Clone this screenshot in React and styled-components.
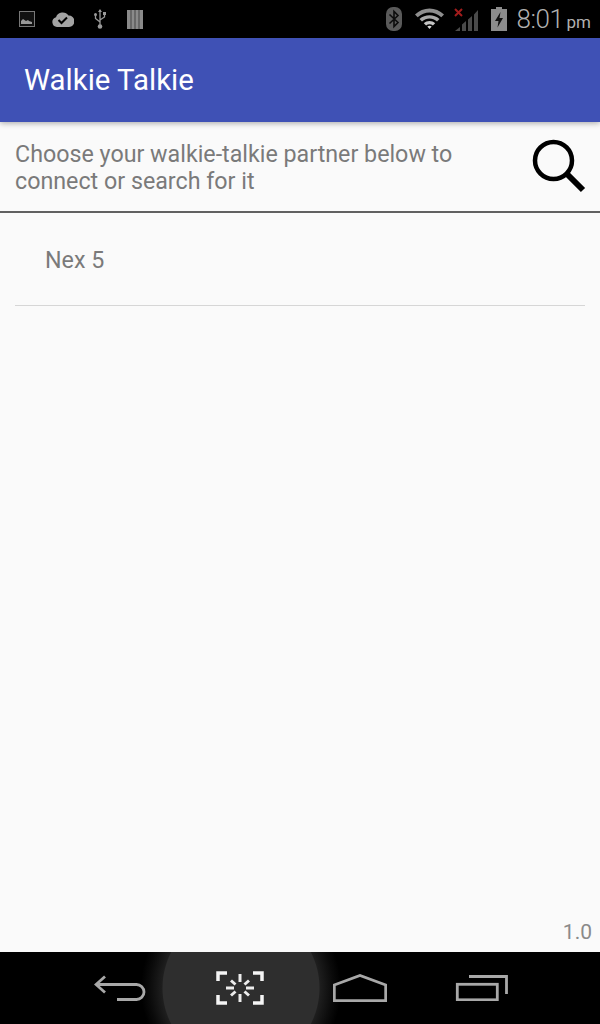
import React from "react";
import styled, { createGlobalStyle } from "styled-components";

const Global = createGlobalStyle`
  html, body { margin: 0; padding: 0; background: #fafafa; }
  * { box-sizing: border-box; }
`;

const Screen = styled.div`
  width: 600px;
  height: 1024px;
  display: flex;
  flex-direction: column;
  font-family: Roboto, "Liberation Sans", sans-serif;
  background: #fafafa;
  overflow: hidden;
`;

const StatusBar = styled.div`
  height: 38px;
  flex: none;
  background: #000;
  display: flex;
  align-items: center;
  justify-content: space-between;
  padding: 0 9px 0 19px;
`;

const StatusGroup = styled.div`
  display: flex;
  align-items: center;
  gap: ${(p) => p.$gap}px;
`;

const Time = styled.span`
  font-size: 26px;
  font-weight: 300;
  letter-spacing: -0.4px;
  color: #b0b0b0;
  margin-left: -1px;
  padding-top: 3px;
  white-space: nowrap;
  line-height: 35px;
`;

const Meridiem = styled.span`
  font-size: 17px;
  font-weight: 400;
  letter-spacing: 0;
  margin-left: 3px;
`;

const AppBar = styled.header`
  height: 84px;
  flex: none;
  background: #3f51b5;
  display: flex;
  align-items: center;
  padding-left: 24px;
  box-shadow: 0 1px 6px rgba(0, 0, 0, 0.35);
  position: relative;
`;

const Title = styled.h1`
  margin: 0;
  font-size: 29.4px;
  font-weight: 400;
  color: #fff;
`;

const Prompt = styled.div`
  height: 91px;
  flex: none;
  display: flex;
  align-items: center;
  justify-content: space-between;
  padding: 2px 14px 0 15px;
  border-bottom: 2px solid #616161;
`;

const PromptText = styled.p`
  margin: 0;
  width: 480px;
  font-size: 23.25px;
  line-height: 27px;
  color: #7a7a7a;
`;

const SearchSlot = styled.div`
  display: flex;
  margin-top: -4px;
`;

const List = styled.div`
  flex: 1;
  padding: 0 15px;
  display: flex;
  flex-direction: column;
`;

const Row = styled.div`
  height: 93px;
  padding: 1px 0 0 30px;
  display: flex;
  align-items: center;
  font-size: 23.25px;
  color: #7a7a7a;
  border-bottom: 1px solid #d6d6d6;
`;

const Version = styled.div`
  height: 40px;
  flex: none;
  display: flex;
  justify-content: flex-end;
  align-items: center;
  padding-right: 8px;
  font-size: 21px;
  color: #8a8a8a;
`;

const NavBar = styled.nav`
  height: 72px;
  flex: none;
  padding-left: 60px;
  display: grid;
  grid-template-columns: repeat(4, 120px);
  align-items: center;
  justify-items: center;
  background:
    radial-gradient(circle 100px at 241px 36px, #2e2e2e 0 78px, #1e1e1e 79px, #0a0a0a 92px, transparent 100px),
    #000;
`;

const ImageIcon = () => (
  <svg width="16" height="16" viewBox="0 0 16 16">
    <rect x="0.5" y="0.5" width="15" height="15" fill="#111" stroke="#777" />
    <path d="M2 13V10l2-2 3 2 2-1 1 1 3 1v2z" fill="#999" />
  </svg>
);

const CloudIcon = () => (
  <svg width="22" height="16" viewBox="0 0 22 16">
    <path d="M5 16a5 5 0 0 1-1-9.800A7 7 0 0 1 16.500 4.600 5.700 5.700 0 0 1 17 16z" fill="#a3a3a3" />
    <path d="M6.500 9l3 3 5.500-5.500" fill="none" stroke="#000" strokeWidth="2" />
  </svg>
);

const UsbIcon = () => (
  <svg width="19" height="20" viewBox="-2 0 19 20">
    <path d="M7 1v15M7 13 2.500 9.500V6M7 11l4.500-3V5" fill="none" stroke="#999" strokeWidth="1.300" />
    <path d="M7 0 5 3h4z" fill="#999" />
    <circle cx="2.500" cy="5.500" r="1.500" fill="#999" />
    <rect x="10" y="3" width="3" height="3" fill="#999" />
    <circle cx="7" cy="17.500" r="2.300" fill="#999" />
  </svg>
);

const BarsIcon = () => (
  <svg width="16" height="19" viewBox="0 0 16 19">
    <rect width="16" height="19" fill="#8a8a8a" />
    <path d="M4 0v19M8 0v19M12 0v19" stroke="#333" strokeWidth="0.800" />
  </svg>
);

const BluetoothIcon = () => (
  <svg width="16" height="24" viewBox="0 0 16 24">
    <rect width="16" height="24" rx="7" fill="#5a5a5a" />
    <path d="M3.500 7.500 12 15.500 8 19.500V4.500l4 4-8.500 8" fill="none" stroke="#0c0c0c" strokeWidth="1.600" />
  </svg>
);

const WifiIcon = () => (
  <svg width="32" height="22" viewBox="-3 0 32 22">
    <path d="M0 6.500C8 -1.500 21 -1.500 29 6.500L26.300 9.300C19.500 3 9.500 3 2.700 9.300z" fill="#8e8e8e" />
    <path d="M4.500 11C10 6 19 6 24.500 11L22 13.500C17.500 9.500 11.500 9.500 7 13.500z" fill="#a8a8a8" />
    <path d="M8.800 15.200C12 12.300 17 12.300 20.200 15.200L17.900 17.500C16 15.900 13 15.900 11.100 17.500z" fill="#c4c4c4" />
    <path d="M12.300 18.600C13.500 17.600 15.500 17.600 16.700 18.600L14.500 21z" fill="#d8d8d8" />
  </svg>
);

const SignalIcon = () => (
  <svg width="27" height="24" viewBox="0 0 27 24">
    <path d="M1 24 6 20V24zM8 24V17.500L12 14V24zM14 24V12.500L18 9V24zM20 24V7.500L24 3V24z" fill="#4a4a4a" />
    <path d="M1 2 8 9M8 2 1 9" stroke="#a11c1c" strokeWidth="2" />
  </svg>
);

const BatteryIcon = () => (
  <svg width="16" height="24" viewBox="0 0 16 24">
    <path d="M5 0h6v2h5v22H0V2h5z" fill="#8c8c8c" />
    <path d="M9.500 5 4 14h3.500l-1 6.500L12 11H8.500z" fill="#111" />
  </svg>
);

const BackIcon = () => (
  <svg width="52" height="26" viewBox="0 0 52 26">
    <path d="M11 1.500 2 9.500l9 8M2 9.500h40.500a7.500 7.500 0 0 1 0 15H23" fill="none" stroke="#a8a8a8" strokeWidth="2.800" />
  </svg>
);

const ScanIcon = () => (
  <svg width="48" height="34" viewBox="0 0 48 34">
    <path d="M11 2H2v8M37 2h9v8M2 24v8h9M46 24v8h-9" fill="none" stroke="#f4f4f4" strokeWidth="3.500" />
    <path d="M24 3v8M24 23v8M10 17h8M30 17h8M15 9.500l4.500 4M33 9.500l-4.500 4M15 24.500l4.500-4M33 24.500l-4.500-4" stroke="#ececec" strokeWidth="3" />
  </svg>
);

const HomeIcon = () => (
  <svg width="54" height="28" viewBox="0 0 54 28">
    <path d="M1.300 26.700V11L27 1.500 52.700 11V26.700z" fill="none" stroke="#a8a8a8" strokeWidth="2.800" />
  </svg>
);

const RecentsIcon = () => (
  <svg width="55" height="26" viewBox="-3 0 55 26">
    <path d="M13 1.500H50.500V19" fill="none" stroke="#a8a8a8" strokeWidth="2.800" />
    <rect x="1.300" y="9.300" width="40" height="15.500" fill="none" stroke="#a8a8a8" strokeWidth="2.800" />
  </svg>
);

const SearchIcon = () => (
  <svg width="54" height="54" viewBox="0 0 54 54">
    <circle cx="21.500" cy="21.500" r="18.500" fill="none" stroke="#000" strokeWidth="4.500" />
    <path d="M34 34 51 51" stroke="#000" strokeWidth="6" />
  </svg>
);

export default function App() {
  return (
    <Screen>
      <Global />
      <StatusBar>
        <StatusGroup $gap={17}>
          <ImageIcon />
          <CloudIcon />
          <UsbIcon />
          <BarsIcon />
        </StatusGroup>
        <StatusGroup $gap={10}>
          <BluetoothIcon />
          <WifiIcon />
          <SignalIcon />
          <BatteryIcon />
          <Time>
            8:01<Meridiem>pm</Meridiem>
          </Time>
        </StatusGroup>
      </StatusBar>
      <AppBar>
        <Title>Walkie Talkie</Title>
      </AppBar>
      <Prompt>
        <PromptText>Choose your walkie-talkie partner below to connect or search for it</PromptText>
        <SearchSlot>
          <SearchIcon />
        </SearchSlot>
      </Prompt>
      <List>
        <Row>Nex 5</Row>
      </List>
      <Version>1.0</Version>
      <NavBar>
        <BackIcon />
        <ScanIcon />
        <HomeIcon />
        <RecentsIcon />
      </NavBar>
    </Screen>
  );
}
